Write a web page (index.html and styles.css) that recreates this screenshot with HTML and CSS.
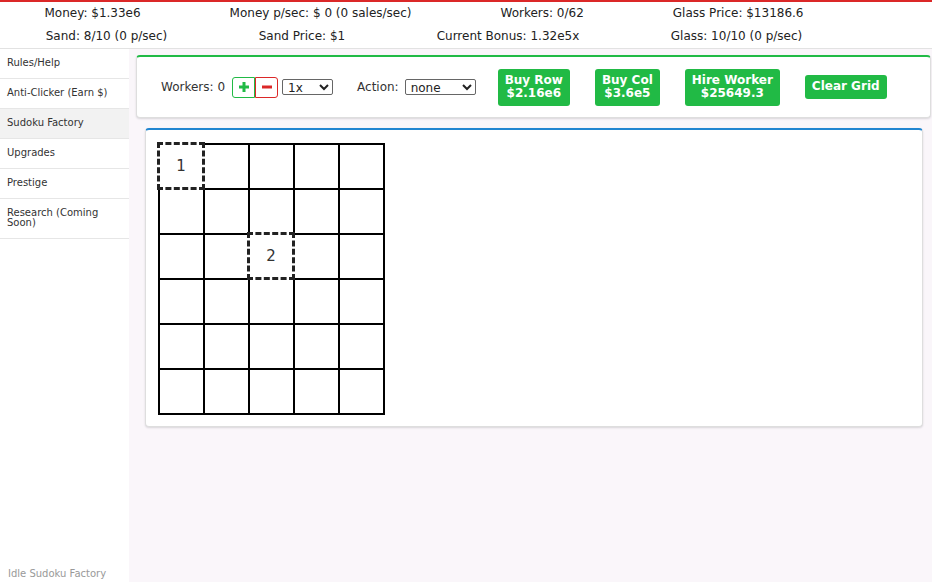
FILE: index.html
```html
<!DOCTYPE html>
<html>
<head>
<meta charset="utf-8">
<link rel="stylesheet" href="styles.css">
</head>
<body>
<header class="stats">
  <div class="stats-row">
    <span>Money: $1.33e6</span>
    <span>Money p/sec: $ 0 (0 sales/sec)</span>
    <span>Workers: 0/62</span>
    <span>Glass Price: $13186.6</span>
  </div>
  <div class="stats-row">
    <span>Sand: 8/10 (0 p/sec)</span>
    <span>Sand Price: $1</span>
    <span>Current Bonus: 1.32e5x</span>
    <span>Glass: 10/10 (0 p/sec)</span>
  </div>
</header>
<div class="layout">
  <nav class="sidebar">
    <div class="menu-item">Rules/Help</div>
    <div class="menu-item">Anti-Clicker (Earn $)</div>
    <div class="menu-item active">Sudoku Factory</div>
    <div class="menu-item">Upgrades</div>
    <div class="menu-item">Prestige</div>
    <div class="menu-item">Research (Coming Soon)</div>
    <div class="sidebar-footer">Idle Sudoku Factory</div>
  </nav>
  <main class="main">
    <section class="card card-green controls">
      <span class="label">Workers: 0</span>
      <div class="pm">
        <button class="pm-btn plus" aria-label="add worker">
          <svg width="12" height="12" viewBox="0 0 12 12"><path d="M6 1v10M1 6h10" stroke="#21ba45" stroke-width="3"/></svg>
        </button>
        <button class="pm-btn minus" aria-label="remove worker">
          <svg width="12" height="12" viewBox="0 0 12 12"><path d="M1 6h10" stroke="#db2828" stroke-width="3"/></svg>
        </button>
      </div>
      <select class="sel sel-mult"><option>1x</option></select>
      <span class="label action-label">Action:</span>
      <select class="sel sel-action"><option>none</option></select>
      <button class="gbtn first">Buy Row<br>$2.16e6</button>
      <button class="gbtn">Buy Col<br>$3.6e5</button>
      <button class="gbtn">Hire Worker<br>$25649.3</button>
      <button class="gbtn">Clear Grid</button>
    </section>
    <section class="card card-blue">
      <table class="grid">
        <tr><td class="mark">1</td><td></td><td></td><td></td><td></td></tr>
        <tr><td></td><td></td><td></td><td></td><td></td></tr>
        <tr><td></td><td></td><td class="mark">2</td><td></td><td></td></tr>
        <tr><td></td><td></td><td></td><td></td><td></td></tr>
        <tr><td></td><td></td><td></td><td></td><td></td></tr>
        <tr><td></td><td></td><td></td><td></td><td></td></tr>
      </table>
    </section>
  </main>
</div>
</body>
</html>
```
FILE: styles.css
```css
* { box-sizing: border-box; }
html, body { margin: 0; padding: 0; }
body {
  font-family: "DejaVu Sans", sans-serif;
  color: #333;
  background: #faf6fa;
  width: 932px;
  height: 582px;
  overflow: hidden;
}
.stats {
  background: #fff;
  border-top: 2px solid #db2828;
  border-bottom: 1px solid #e2e2e2;
  height: 49px;
  padding-top: 2px;
  font-size: 12px;
  color: #222;
}
.stats-row {
  width: 848px;
  display: flex;
  justify-content: space-around;
  height: 23px;
  line-height: 18px;
}
.layout {
  display: flex;
  height: 533px;
}
.sidebar {
  width: 129px;
  flex: none;
  background: #fff;
  display: flex;
  flex-direction: column;
  font-size: 10px;
  color: #333;
}
.menu-item {
  padding: 9px 16px 10px 7px;
  line-height: 10px;
  border-bottom: 1px solid #e6e6e6;
}
.menu-item.active { background: #f2f2f2; }
.sidebar-footer {
  margin-top: auto;
  padding: 0 0 0 8px;
  height: 13px;
  line-height: 10px;
  color: #999;
}
.main {
  flex: 1;
  padding-top: 6px;
}
.card {
  background: #fff;
  border: 1px solid #dedede;
  border-radius: 4px;
  box-shadow: 0 1px 2px rgba(34,36,38,0.15);
}
.card-green {
  border-top: 2px solid #21ba45;
  margin: 0 1px 0 7px;
}
.card-blue {
  border-top: 2px solid #2185d0;
  margin: 10px 9px 0 16px;
  padding: 12px 11px 11px 11px;
}
.controls {
  display: flex;
  align-items: center;
  height: 63px;
  padding: 0 0 0 24px;
  font-size: 12px;
}
.label { color: #333; }
.pm {
  display: flex;
  margin-left: 7px;
}
.pm-btn {
  width: 23px;
  height: 21px;
  background: #fff;
  padding: 0;
  display: flex;
  align-items: center;
  justify-content: center;
}
.plus {
  border: 1px solid #21ba45;
  border-radius: 3px 0 0 3px;
}
.minus {
  border: 1px solid #db2828;
  border-radius: 0 3px 3px 0;
}
.sel {
  font-family: "DejaVu Sans", sans-serif;
  font-size: 12px;
  height: 16px;
  padding: 0 0 0 1px;
  border: 1px solid #666;
  border-radius: 2px;
  background: #fff;
  color: #222;
}
.sel-mult { width: 51px; margin-left: 4px; }
.action-label { margin-left: 24px; }
.sel-action { width: 71px; margin-left: 6px; }
.gbtn {
  background: #21ba45;
  color: #fff;
  border: none;
  border-radius: 3px;
  font-family: "DejaVu Sans", sans-serif;
  font-weight: bold;
  font-size: 12px;
  line-height: 13px;
  padding: 5px 7px 6px;
  margin-left: 25px;
  text-align: center;
}
.gbtn.first { margin-left: 22px; }
.grid {
  border-collapse: collapse;
}
.grid td {
  width: 45px;
  height: 45px;
  padding: 0;
  border: 2px solid #000;
  text-align: center;
  vertical-align: middle;
  font-size: 15px;
  color: #333;
}
.grid td.mark {
  border: 3px dashed #222;
}
```
